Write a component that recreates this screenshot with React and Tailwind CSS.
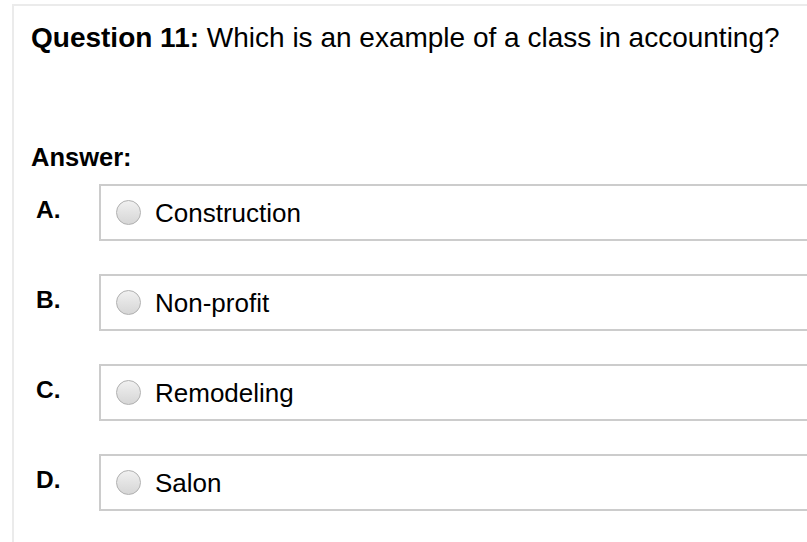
import React from "react";

const options = [
  { letter: "A.", text: "Construction" },
  { letter: "B.", text: "Non-profit" },
  { letter: "C.", text: "Remodeling" },
  { letter: "D.", text: "Salon" },
];

export default function App() {
  return (
    <div
      className="w-[807px] h-[542px] overflow-hidden bg-white pt-[4px] pl-[12px] leading-[1.15]"
      style={{ fontFamily: '"Liberation Sans", Arial, sans-serif' }}
    >
      <div className="w-[900px] h-[600px] border-t-2 border-l-2 border-[#ebebeb] pl-[17px] pt-[16px] text-black">
        <div className="text-[28px] leading-[1.15] whitespace-nowrap">
          <span className="font-bold">Question 11:</span> Which is an example of a class in accounting?
        </div>
        <div className="mt-[89px] text-[25.5px] leading-[1.15] font-bold">Answer:</div>
        <div className="mt-[11px] flex flex-col gap-[33px]">
          {options.map((o) => (
            <div key={o.letter} className="flex">
              <div className="w-[68px] pl-[5px] pt-[12px] text-[24.5px] leading-[1.15] font-bold">{o.letter}</div>
              <div className="w-[760px] h-[57px] border-2 border-[#cccccc] flex items-center pl-[15px]">
                <span className="w-[25px] h-[25px] rounded-full border border-[#b0b0b0] bg-gradient-to-b from-[#f0f0f0] to-[#d6d6d6] shrink-0" />
                <span className="ml-[14px] pt-[3px] text-[26px] leading-[1.15]">{o.text}</span>
              </div>
            </div>
          ))}
        </div>
      </div>
    </div>
  );
}
